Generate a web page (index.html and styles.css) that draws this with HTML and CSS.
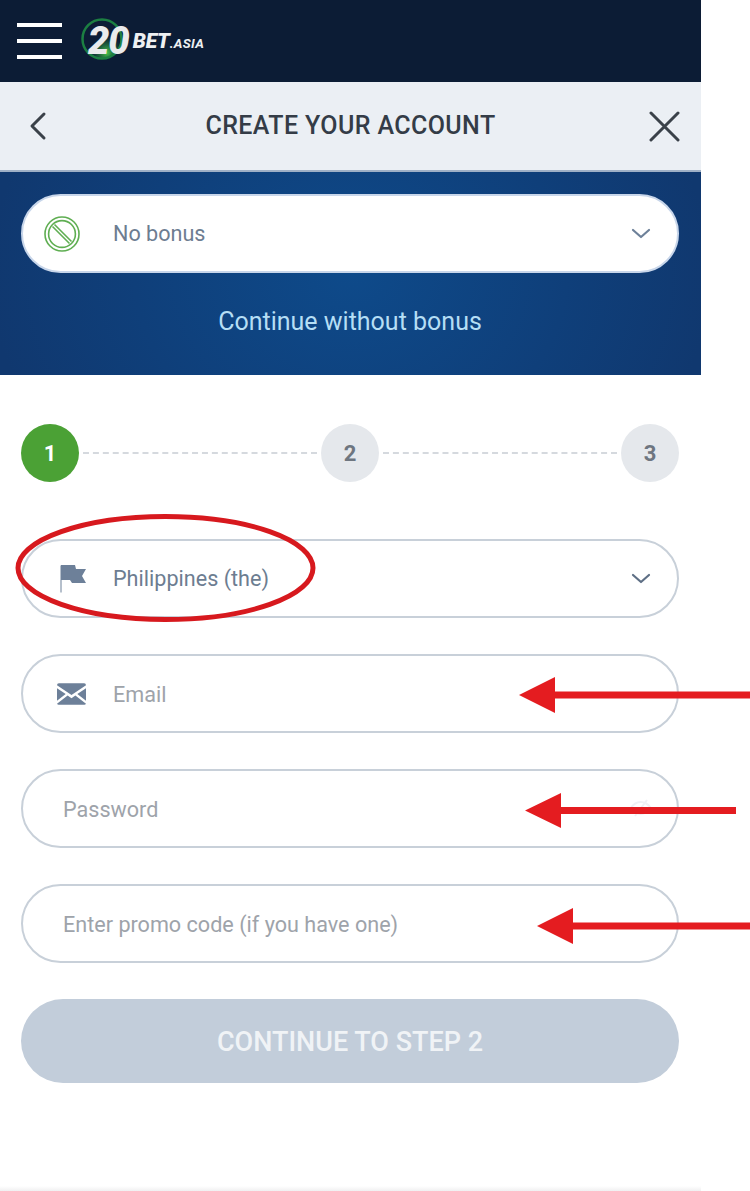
FILE: index.html
```html
<!DOCTYPE html>
<html lang="en">
<head>
<meta charset="utf-8">
<title>Create your account</title>
<link rel="stylesheet" href="styles.css">
</head>
<body>
<main class="page">
  <header class="topbar">
    <div class="burger"><span></span><span></span><span></span></div>
    <div class="logo">
      <svg class="logo-ring" width="52" height="46" viewBox="0 0 52 46"><defs><radialGradient id="glow" cx="0.62" cy="0.85" r="0.42"><stop offset="0" stop-color="#48c84c"/><stop offset="1" stop-color="#1a7a3c" stop-opacity="0"/></radialGradient></defs><circle cx="24" cy="22" r="19.500" fill="url(#glow)" stroke="#1c7f42" stroke-width="2.500"/></svg>
      <span class="logo-num">20</span><span class="logo-bet">BET</span><span class="logo-asia">.ASIA</span>
    </div>
  </header>
  <div class="titlebar">
    <svg class="back" width="20" height="30" viewBox="0 0 20 30"><path d="M17 3 5 15l12 12" fill="none" stroke="#3a4149" stroke-width="3" stroke-linecap="round" stroke-linejoin="round"/></svg>
    <h1>CREATE YOUR ACCOUNT</h1>
    <svg class="close" width="31" height="31" viewBox="0 0 31 31"><path d="M2 2l27 27M29 2 2 29" fill="none" stroke="#3a4149" stroke-width="3" stroke-linecap="round"/></svg>
  </div>
  <section class="bonus">
    <div class="field field-bonus">
      <svg class="icon-ban" width="38" height="38" viewBox="0 0 38 38"><g fill="none" stroke="#5fae52" stroke-width="1.600"><circle cx="19" cy="19" r="17"/><circle cx="19" cy="19" r="13.400"/><path d="M9.500 11.500 26.500 28.500M11.500 9.500 28.500 26.500"/></g></svg>
      <span class="value">No bonus</span>
      <svg class="chev" width="20" height="12" viewBox="0 0 20 12"><path d="M2 2l8 7 8-7" fill="none" stroke="#6d8099" stroke-width="2.200" stroke-linecap="round" stroke-linejoin="round"/></svg>
    </div>
    <p class="bonus-link">Continue without bonus</p>
  </section>
  <section class="form">
    <ol class="steps">
      <li class="step step-on">1</li><li class="line"></li><li class="step">2</li><li class="line"></li><li class="step">3</li>
    </ol>
    <div class="field">
      <svg class="icon icon-flag" width="30" height="30" viewBox="0 0 30 30"><path d="M2 1.500v27" stroke="#6d8099" stroke-width="1"/><path d="M2 1h14l1 4h10l-4 7 4 7H13l-2-3H2z" fill="#6d8099"/></svg>
      <span class="value">Philippines (the)</span>
      <svg class="chev" width="20" height="12" viewBox="0 0 20 12"><path d="M2 2l8 7 8-7" fill="none" stroke="#5e6f85" stroke-width="2.200" stroke-linecap="round" stroke-linejoin="round"/></svg>
    </div>
    <div class="field">
      <svg class="icon icon-mail" width="29" height="22" viewBox="0 0 30 22"><path d="M2 0h26a2 2 0 0 1 2 2L15 12 0 2a2 2 0 0 1 2-2zM0 5l9 6-9 7zM30 5l-9 6 9 7zM11 12.500l4 2.800 4-2.800L30 21a2 2 0 0 1-2 1H2a2 2 0 0 1-2-1z" fill="#6d8099"/></svg>
      <span class="hint">Email</span>
    </div>
    <div class="field field-plain">
      <span class="hint">Password</span>
      <svg class="eye" width="24" height="22" viewBox="0 0 24 22"><path d="M2 11c5-8 14-8 20 0-6 8-15 8-20 0zM6 19 18 3" fill="none" stroke="#eff1f5" stroke-width="2"/></svg>
    </div>
    <div class="field field-plain">
      <span class="hint">Enter promo code (if you have one)</span>
    </div>
    <button class="cta" type="button">CONTINUE TO STEP 2</button>
  </section>
  <div class="foot"></div>
</main>
<svg class="marks" width="750" height="1191" viewBox="0 0 750 1191">
  <ellipse cx="165.500" cy="568" rx="147.500" ry="51.500" fill="none" stroke="#d7191e" stroke-width="5"/>
  <path d="M750 691.500H555V677l-36 18 36 18V698.500H750z" fill="#e41c20"/>
  <path d="M736 807H561V793l-36 17.500L561 828V814H736z" fill="#e41c20"/>
  <path d="M750 922.500H573V908l-36 18 36 18V929.500H750z" fill="#e41c20"/>
</svg>
</body>
</html>
```
FILE: styles.css
```css
* { box-sizing: border-box; }
html, body { margin: 0; background: #fff; }
body { width: 750px; height: 1191px; overflow: hidden; position: relative; font-family: Roboto, "Liberation Sans", sans-serif; }
.page { width: 701px; height: 1191px; display: flex; flex-direction: column; }

.topbar { height: 82px; flex: none; background: #0c1c35; display: flex; align-items: center; padding: 0 0 0 17px; gap: 17px; }
.burger { width: 45px; height: 36px; display: flex; flex-direction: column; justify-content: space-between; }
.burger span { display: block; height: 4px; background: #fff; }
.logo { position: relative; display: flex; align-items: baseline; width: 130px; height: 46px; margin-top: -3px; color: #eef0f2; font-style: italic; font-weight: 900; }
.logo-ring { position: absolute; left: -1px; top: 0; }
.logo-num { position: relative; font-size: 38px; line-height: 46px; margin-left: 9px; letter-spacing: -1px; color: #e9eaec; transform: translateY(1px); }
.logo-bet { position: relative; font-size: 21px; margin-left: 4px; letter-spacing: -0.200px; transform: translateY(-5px); }
.logo-asia { position: relative; font-size: 13.300px; font-weight: 700; letter-spacing: 0.300px; transform: translateY(-5px); }

.titlebar { height: 90px; flex: none; background: #ebeff4; border-bottom: 2px solid #9fb0c6; display: grid; grid-template-columns: 1fr auto 1fr; align-items: center; padding: 0 21px; }
.titlebar h1 { margin: 0; font-size: 25px; font-weight: 500; letter-spacing: 0.400px; color: #343c47; line-height: 30px; }
.back { margin: 0 0 1px 6px; }
.close { justify-self: end; margin-top: 1px; }

.bonus { height: 203px; flex: none; padding: 22px 22px 0 21px; background: radial-gradient(ellipse 360px 300px at 50% 50%, #0e4a8a 0%, #0f3f7a 60%, #10386f 100%); }
.field { height: 79px; border: 2px solid #c8d0d9; border-radius: 40px; background: #fff; display: flex; align-items: center; padding: 0 26px 0 21px; margin-bottom: 36px; position: relative; }
.field-bonus { margin-bottom: 0; border-color: #c8d6ea; }
.field-plain { padding-left: 40px; }
.icon-ban { margin-left: -1px; margin-right: 32px; flex: none; }
.icon { flex: none; }
.icon-flag { margin: 0 24px 0 15px; }
.icon-mail { margin: 0 27px 0 13px; }
.value { font-size: 21.600px; color: #6d7d91; flex: 1; }
.hint { font-size: 21.600px; color: #9ea3aa; flex: 1; padding-top: 1px; }
.chev { flex: none; }
.eye { position: absolute; right: 24px; top: 26px; }
.bonus-link { margin: 33px 0 0; text-align: center; font-size: 25px; line-height: 32px; color: #b5def5; }

.form { flex: 1; padding: 49px 22px 0 21px; }
.steps { list-style: none; margin: 0 0 57px; padding: 0; display: flex; align-items: center; }
.step { width: 58px; height: 58px; border-radius: 50%; background: #e5e8ec; color: #6e7680; display: flex; align-items: center; justify-content: center; font-size: 22px; font-weight: 700; flex: none; }
.step-on { background: #4ba135; color: #fff; }
.line { flex: 1; margin: 0 4px; border-top: 2px dashed #d5d9de; }
.cta { display: block; width: 100%; height: 84px; padding: 2px 0 0; border: 0; border-radius: 42px; background: #c2cdda; color: #f0f3f6; font: 500 27px Roboto, "Liberation Sans", sans-serif; }
.foot { height: 5px; flex: none; background: linear-gradient(#fff, #f0f0f1); }

.marks { position: absolute; left: 0; top: 0; pointer-events: none; }
```
